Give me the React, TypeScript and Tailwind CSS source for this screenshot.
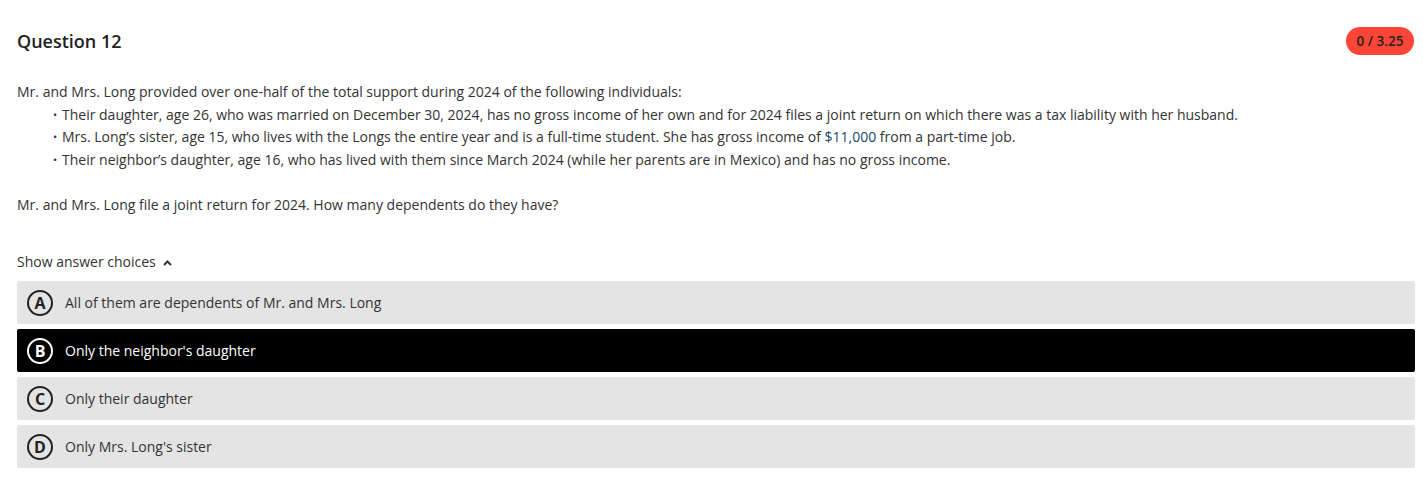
import React from "react";

const choices = [
  { letter: "A", text: "All of them are dependents of Mr. and Mrs. Long", selected: false },
  { letter: "B", text: "Only the neighbor's daughter", selected: true },
  { letter: "C", text: "Only their daughter", selected: false },
  { letter: "D", text: "Only Mrs. Long's sister", selected: false },
];

export default function App() {
  return (
    <div
      className="bg-white min-h-[497px] pl-[17px] pr-[8px] text-[#333]"
      style={{ fontFamily: '"Open Sans", sans-serif' }}
    >
      <div className="flex items-center justify-between pt-[27px] h-[55px]">
        <h2 className="text-[18px] font-semibold text-[#222] leading-[28px]">Question 12</h2>
        <span className="bg-[#ff4538] text-[#222] text-[13.5px] font-semibold rounded-full h-[28px] w-[68px] justify-center flex items-center mr-[1px]">
          0 / 3.25
        </span>
      </div>
      <div className="mt-[26px] text-[14px] leading-[22.5px]">
        <p>Mr. and Mrs. Long provided over one-half of the total support during 2024 of the following individuals:</p>
        <ul className="pl-[36px]">
          <li className="flex">
            <span className="w-[9px] text-[11px]">•</span>
            <span>Their daughter, age 26, who was married on December 30, 2024, has no gross income of her own and for 2024 files a joint return on which there was a tax liability with her husband.</span>
          </li>
          <li className="flex">
            <span className="w-[9px] text-[11px]">•</span>
            <span>
              Mrs. Long’s sister, age 15, who lives with the Longs the entire year and is a full-time student. She has gross income of{" "}
              <span className="text-[#24466f]">$11,000</span> from a part-time job.
            </span>
          </li>
          <li className="flex">
            <span className="w-[9px] text-[11px]">•</span>
            <span>Their neighbor’s daughter, age 16, who has lived with them since March 2024 (while her parents are in Mexico) and has no gross income.</span>
          </li>
        </ul>
        <p className="mt-[22.5px]">Mr. and Mrs. Long file a joint return for 2024. How many dependents do they have?</p>
      </div>
      <div className="mt-[36px] flex items-center gap-[7px] text-[14px] leading-[20px]">
        <span>Show answer choices</span>
        <svg width="9" height="6" viewBox="0 0 9 6" className="mt-[2px]">
          <path d="M1 5 L4.5 1.5 L8 5" fill="none" stroke="#333" strokeWidth="2" />
        </svg>
      </div>
      <div className="mt-[9px] flex flex-col gap-[5px]">
        {choices.map((c) => (
          <div
            key={c.letter}
            className={
              c.selected
                ? "h-[43px] rounded-[2px] bg-black text-white flex items-center pl-[10px] text-[14px]"
                : "h-[43px] rounded-[2px] bg-[#e4e4e4] text-[#333] flex items-center pl-[10px] text-[14px]"
            }
          >
            <span
              className={
                c.selected
                  ? "w-[26px] h-[26px] rounded-full border-2 border-white flex items-center justify-center font-bold text-[16px] leading-none"
                  : "w-[26px] h-[26px] rounded-full border-2 border-[#222] flex items-center justify-center font-bold text-[16px] leading-none text-[#222]"
              }
            >
              {c.letter}
            </span>
            <span className="ml-[12px]">{c.text}</span>
          </div>
        ))}
      </div>
    </div>
  );
}
